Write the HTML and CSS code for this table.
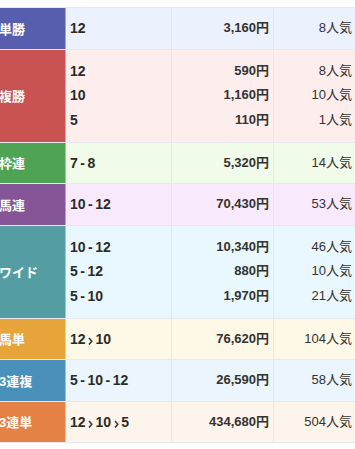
FILE: index.html
```html
<!DOCTYPE html>
<html lang="ja">
<head>
<meta charset="utf-8">
<link rel="stylesheet" href="styles.css">
</head>
<body>
<div class="payouts">
  <div class="row r-tan">
    <div class="label">単勝</div>
    <div class="cell combo"><div class="line">12</div></div>
    <div class="cell pay"><div class="line">3,160円</div></div>
    <div class="cell pop"><div class="line">8人気</div></div>
  </div>
  <div class="row r-fuku multi">
    <div class="label">複勝</div>
    <div class="cell combo"><div class="line">12</div><div class="line">10</div><div class="line">5</div></div>
    <div class="cell pay"><div class="line">590円</div><div class="line">1,160円</div><div class="line">110円</div></div>
    <div class="cell pop"><div class="line">8人気</div><div class="line">10人気</div><div class="line">1人気</div></div>
  </div>
  <div class="row r-waku">
    <div class="label">枠連</div>
    <div class="cell combo"><div class="line">7<span class="dash">-</span>8</div></div>
    <div class="cell pay"><div class="line">5,320円</div></div>
    <div class="cell pop"><div class="line">14人気</div></div>
  </div>
  <div class="row r-umaren">
    <div class="label">馬連</div>
    <div class="cell combo"><div class="line">10<span class="dash">-</span>12</div></div>
    <div class="cell pay"><div class="line">70,430円</div></div>
    <div class="cell pop"><div class="line">53人気</div></div>
  </div>
  <div class="row r-wide multi">
    <div class="label">ワイド</div>
    <div class="cell combo"><div class="line">10<span class="dash">-</span>12</div><div class="line">5<span class="dash">-</span>12</div><div class="line">5<span class="dash">-</span>10</div></div>
    <div class="cell pay"><div class="line">10,340円</div><div class="line">880円</div><div class="line">1,970円</div></div>
    <div class="cell pop"><div class="line">46人気</div><div class="line">10人気</div><div class="line">21人気</div></div>
  </div>
  <div class="row r-umatan">
    <div class="label">馬単</div>
    <div class="cell combo"><div class="line">12<svg class="arrow" width="5" height="8" viewBox="0 0 5 8"><polyline points="1,1 3.8,4.3 1,7.6" fill="none" stroke="#333" stroke-width="1.5"/></svg>10</div></div>
    <div class="cell pay"><div class="line">76,620円</div></div>
    <div class="cell pop"><div class="line">104人気</div></div>
  </div>
  <div class="row r-sanfuku">
    <div class="label">3連複</div>
    <div class="cell combo"><div class="line">5<span class="dash">-</span>10<span class="dash">-</span>12</div></div>
    <div class="cell pay"><div class="line">26,590円</div></div>
    <div class="cell pop"><div class="line">58人気</div></div>
  </div>
  <div class="row r-santan">
    <div class="label">3連単</div>
    <div class="cell combo"><div class="line">12<svg class="arrow" width="5" height="8" viewBox="0 0 5 8"><polyline points="1,1 3.8,4.3 1,7.6" fill="none" stroke="#333" stroke-width="1.5"/></svg>10<svg class="arrow" width="5" height="8" viewBox="0 0 5 8"><polyline points="1,1 3.8,4.3 1,7.6" fill="none" stroke="#333" stroke-width="1.5"/></svg>5</div></div>
    <div class="cell pay"><div class="line">434,680円</div></div>
    <div class="cell pop"><div class="line">504人気</div></div>
  </div>
</div>
</body>
</html>
```
FILE: styles.css
```css
html, body {
  margin: 0;
  padding: 0;
  background: #fff;
}
body {
  padding-top: 7px;
  font-family: "Liberation Sans", Arial, "Noto Sans CJK JP", sans-serif;
  color: #333;
  overflow: hidden;
}
.payouts {
  width: 355px;
  border-top: 1px solid #e6e9ef;
}
.row {
  display: grid;
  grid-template-columns: 66px 106px 102px 81px;
  border-bottom: 1px solid #e6e8ee;
}
.label {
  display: flex;
  align-items: center;
  color: #fff;
  font-weight: bold;
  font-size: 13px;
  text-indent: -1px;
  border-right: 1px solid rgba(255, 255, 255, 0.45);
  white-space: nowrap;
  overflow: hidden;
}
.cell {
  padding-top: 8px;
  padding-bottom: 8px;
  line-height: 24.5px;
}
.multi .cell {
  padding-top: 9.25px;
  padding-bottom: 9.25px;
}
.combo {
  padding-left: 4px;
  font-size: 14px;
  font-weight: bold;
  color: #2b2b2b;
  border-right: 1px solid #e4e7ee;
}
.pay {
  padding-right: 4px;
  text-align: right;
  font-size: 13px;
  font-weight: bold;
  border-right: 1px solid #e4e7ee;
}
.pop {
  padding-right: 3px;
  text-align: right;
  font-size: 13px;
}
.dash {
  margin: 0 2.5px;
}
.arrow {
  margin: 0 2.5px 0 2.5px;
  vertical-align: -1px;
}

.r-tan { background: #ebf1fd; }
.r-tan .label { background: #575eae; }
.r-fuku { background: #fdeeed; }
.r-fuku .label { background: #c95253; }
.r-waku { background: #f0fbea; }
.r-waku .label { background: #4ea354; }
.r-umaren { background: #f8eafc; }
.r-umaren .label { background: #855597; }
.r-wide { background: #e9f8fe; }
.r-wide .label { background: #549ea3; }
.r-umatan { background: #fef8e7; }
.r-umatan .label { background: #e6a43b; }
.r-sanfuku { background: #eaf5fd; }
.r-sanfuku .label { background: #4990bb; }
.r-santan { background: #fdf4eb; }
.r-santan .label { background: #e68146; }
```
